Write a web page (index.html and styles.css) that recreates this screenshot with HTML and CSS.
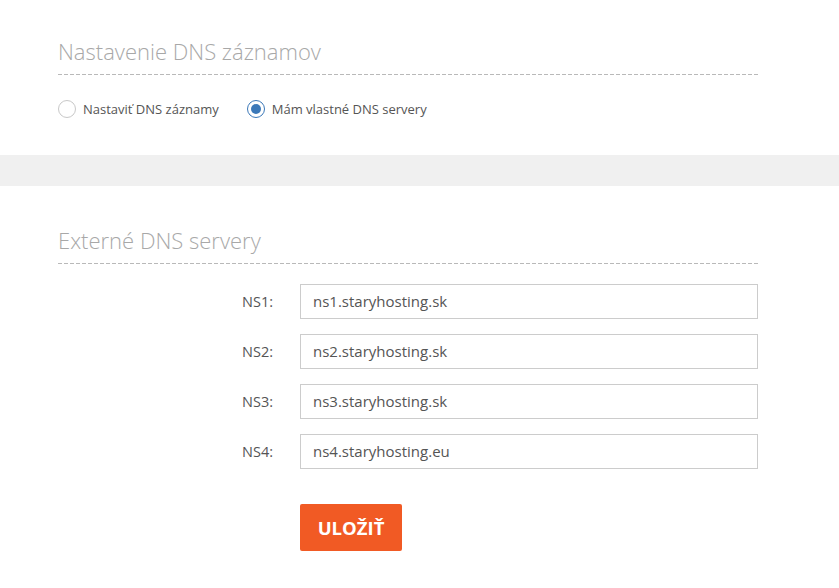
FILE: index.html
```html
<!DOCTYPE html>
<html lang="sk">
<head>
<meta charset="utf-8">
<title>DNS</title>
<link rel="stylesheet" href="styles.css">
</head>
<body>
<section class="section first">
  <h2 class="title">Nastavenie DNS záznamov</h2>
  <div class="radios">
    <label class="radio"><span class="circle"></span><span>Nastaviť DNS záznamy</span></label>
    <label class="radio checked"><span class="circle"></span><span>Mám vlastné DNS servery</span></label>
  </div>
</section>
<div class="band"></div>
<section class="section second">
  <h2 class="title">Externé DNS servery</h2>
  <div class="form">
    <label class="lbl">NS1:</label><div class="input">ns1.staryhosting.sk</div>
    <label class="lbl">NS2:</label><div class="input">ns2.staryhosting.sk</div>
    <label class="lbl">NS3:</label><div class="input">ns3.staryhosting.sk</div>
    <label class="lbl">NS4:</label><div class="input">ns4.staryhosting.eu</div>
    <div></div><div class="actions"><button class="btn">ULOŽIŤ</button></div>
  </div>
</section>
</body>
</html>
```
FILE: styles.css
```css
html, body {
  margin: 0;
  padding: 0;
  background: #fff;
  font-family: "Open Sans", "Liberation Sans", sans-serif;
  color: #555;
}
.section {
  width: 700px;
  padding-left: 58px;
}
.first {
  padding-top: 36px;
  height: 119px;
}
.second {
  padding-top: 39px;
}
.title {
  margin: 0;
  font-size: 22px;
  line-height: 30px;
  height: 30px;
  font-weight: 300;
  color: #a8a8a8;
  padding-bottom: 9px;
  background-image: repeating-linear-gradient(to right, #b9b9b9 0 4px, transparent 4px 6px);
  background-size: 100% 1px;
  background-repeat: no-repeat;
  background-position: left bottom;
}
.radios {
  display: flex;
  gap: 28px;
  margin-top: 24px;
  font-size: 13px;
  color: #555;
}
.radio {
  display: flex;
  align-items: center;
  gap: 7px;
  line-height: 20px;
}
.circle {
  width: 16px;
  height: 16px;
  border: 1px solid #c8c8c8;
  border-radius: 50%;
  display: flex;
  align-items: center;
  justify-content: center;
  background: #fff;
}
.checked .circle {
  border-color: #3b78b8;
}
.checked .circle::after {
  content: "";
  width: 10px;
  height: 10px;
  border-radius: 50%;
  background: #3b78b8;
}
.band {
  height: 31px;
  background: #f0f0f0;
}
.form {
  display: grid;
  grid-template-columns: 215px 458px;
  column-gap: 27px;
  row-gap: 15px;
  margin-top: 20px;
}
.lbl {
  text-align: right;
  font-size: 14.5px;
  line-height: 35px;
  color: #555;
}
.input {
  box-sizing: border-box;
  height: 35px;
  border: 1px solid #cccccc;
  padding: 0 12px;
  font-size: 15px;
  line-height: 33px;
  color: #555;
}
.actions {
  margin-top: 20px;
}
.btn {
  width: 102px;
  height: 47px;
  border: none;
  border-radius: 2px;
  background: #f15a24;
  color: #fff;
  font-family: "Open Sans", "Liberation Sans", sans-serif;
  font-weight: 700;
  font-size: 18.5px;
  padding: 0;
  cursor: pointer;
}
```
